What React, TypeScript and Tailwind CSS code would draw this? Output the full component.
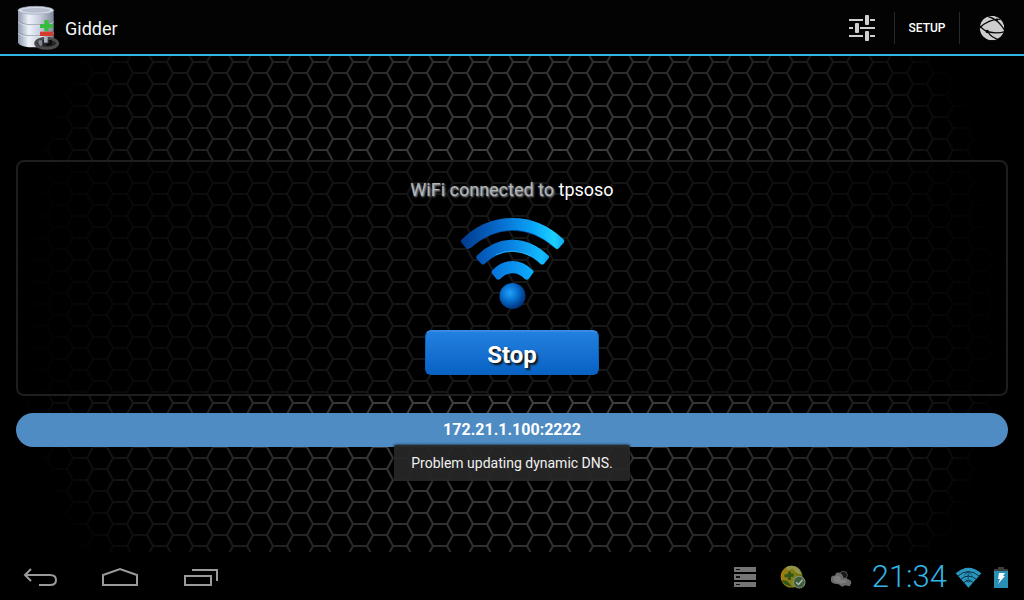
import React from 'react';

function HoneycombBackdrop() {
  return (
    <svg aria-hidden="true" className="absolute inset-0 h-full w-full">
      <defs>
        <pattern id="comb" x="0" y="6" width="40" height="22" patternUnits="userSpaceOnUse">
          <path
            d="M-7 0H7L13 11L7 22H-7M13 11H27L33 22H47M27 11L33 0H47"
            fill="none"
            stroke="#484848"
            strokeWidth="2"
          />
        </pattern>
        <radialGradient id="glow" cx="50%" cy="50%" r="50%">
          <stop offset="0" stopColor="#fff" />
          <stop offset="0.3" stopColor="#ddd" />
          <stop offset="0.6" stopColor="#8c8c8c" />
          <stop offset="0.85" stopColor="#404040" />
          <stop offset="0.98" stopColor="#000" />
        </radialGradient>
        <mask id="fade" maskUnits="userSpaceOnUse" x="0" y="-50%" width="100%" height="200%">
          <rect x="0" y="-50%" width="100%" height="200%" fill="url(#glow)" />
        </mask>
      </defs>
      <rect width="100%" height="100%" fill="url(#comb)" mask="url(#fade)" />
    </svg>
  );
}

function DatabaseIcon() {
  return (
    <svg aria-hidden="true" viewBox="48 15 135 138" className="h-[46px] w-[45px]">
      <defs>
        <linearGradient id="drum">
          <stop offset="0" stopColor="#8d98ad" />
          <stop offset="0.3" stopColor="#eef2fa" />
          <stop offset="0.6" stopColor="#c9d0de" />
          <stop offset="1" stopColor="#7e879b" />
        </linearGradient>
      </defs>
      <path d="M54 31V128Q60 142 107 142Q155 142 161 128V31Z" fill="url(#drum)" />
      <ellipse cx="107.500" cy="31" rx="53.500" ry="12" fill="#d5dae6" stroke="#98a1b4" strokeWidth="2" />
      <ellipse cx="107.500" cy="31" rx="43" ry="7" fill="#b6becd" />
      <path d="M54 63Q62 75 107 75Q153 75 161 63M54 97Q62 108 107 108Q153 108 161 97" fill="none" stroke="#616b80" strokeWidth="2" />
      <path d="M54 65Q62 77 107 77Q153 77 161 65M54 99Q62 110 107 110Q153 110 161 99" fill="none" stroke="#f5f7ff" strokeWidth="2" />
      <path d="M133 60H146V72H159V84H146V94H133V84H120V72H133Z" fill="#36bd3f" />
      <rect x="120" y="95" width="39" height="13" fill="#d83a30" />
      <ellipse cx="140" cy="130" rx="33" ry="15" fill="#242424" stroke="#4a4a4a" strokeWidth="9" />
      <path d="M116 121H127V137H120Q112 132 116 121Z" fill="#7d8493" />
      <path d="M132 109H143V128H132Z" fill="#aab1be" />
      <path d="M152 120V132L140 135" fill="none" stroke="#050505" strokeWidth="5" />
    </svg>
  );
}

function SlidersIcon() {
  return (
    <svg aria-hidden="true" viewBox="0 0 26 26" className="h-[26px] w-[26px]" fill="#cfcfcf">
      <path d="M0 4H14V6H0ZM21 4H26V6H21ZM0 12H4V14H0ZM11 12H26V14H11ZM0 20H14V22H0ZM21 20H26V22H21Z" />
      <rect x="16" y="0" width="4" height="10" rx="1" />
      <rect x="6" y="8" width="4" height="10" rx="1" />
      <rect x="16" y="16" width="4" height="10" rx="1" />
    </svg>
  );
}

function GlobeIcon() {
  return (
    <svg aria-hidden="true" viewBox="448 46 76 76" className="h-[26px] w-[26px]">
      <clipPath id="ball">
        <circle cx="486" cy="84" r="36" />
      </clipPath>
      <g clipPath="url(#ball)">
        <circle cx="486" cy="84" r="36" fill="#cdcdcd" />
        <g fill="none" stroke="#0a0a0a" strokeWidth="4">
          <path d="M448 74Q458 90 474 95Q500 102 526 94" />
          <path d="M450 84Q474 58 512 58" />
          <path d="M474 50Q504 58 524 92" />
          <path d="M474 95Q482 110 504 118" />
        </g>
        <circle cx="472" cy="94" r="5" fill="#0a0a0a" />
        <circle cx="500" cy="60" r="4" fill="#0a0a0a" />
      </g>
    </svg>
  );
}

function WifiLogo() {
  return (
    <svg aria-hidden="true" viewBox="182 171 314 279" className="mt-[15px] h-[93px] w-[105px]">
      <defs>
        <linearGradient id="waveA" gradientUnits="userSpaceOnUse" x1="184" y1="0" x2="495" y2="0">
          <stop offset="0" stopColor="#003a8c" />
          <stop offset="0.35" stopColor="#0868c8" />
          <stop offset="0.7" stopColor="#08a5f8" />
          <stop offset="0.9" stopColor="#1cd0ff" />
          <stop offset="1" stopColor="#10a9ef" />
        </linearGradient>
        <linearGradient id="waveB" gradientUnits="userSpaceOnUse" x1="230" y1="0" x2="450" y2="0">
          <stop offset="0" stopColor="#0350b0" />
          <stop offset="0.5" stopColor="#0a85e4" />
          <stop offset="0.9" stopColor="#14bcff" />
          <stop offset="1" stopColor="#0ba0ee" />
        </linearGradient>
        <linearGradient id="waveC" gradientUnits="userSpaceOnUse" x1="276" y1="0" x2="403" y2="0">
          <stop offset="0" stopColor="#0870d8" />
          <stop offset="1" stopColor="#0bb0ff" />
        </linearGradient>
        <radialGradient id="dot" cx="0.4" cy="0.38" r="0.62">
          <stop offset="0" stopColor="#22a2f8" />
          <stop offset="0.45" stopColor="#0874d4" />
          <stop offset="1" stopColor="#02337a" />
        </radialGradient>
      </defs>
      <path d="M187 238Q253 174 339 174T492 238Q497 243 492 249L478 265Q473 270 467 265Q407 211 339 211T211 265Q205 270 200 265L187 250Q182 244 187 238Z" fill="url(#waveA)" />
      <path d="M211 264Q271 211 339 211T467 264" fill="none" stroke="#0756b5" strokeWidth="2" />
      <path d="M233 286Q281 239 339 239T446 286Q452 291 446 296L434 311Q428 316 422 311Q383 275 339 275T256 311Q250 316 245 311L233 298Q227 292 233 286Z" fill="url(#waveB)" />
      <path d="M290 284Q338 262 395 288" fill="none" stroke="#34c5ff" strokeWidth="2" />
      <path d="M279 330Q306 303 339 303T399 330Q405 335 400 340L387 357Q382 362 376 357Q360 340 339 340T302 357Q297 362 291 357L278 341Q274 335 279 330Z" fill="url(#waveC)" />
      <circle cx="339" cy="408" r="39" fill="url(#dot)" />
    </svg>
  );
}

function NavButton({ label, children }: { label: string; children: React.ReactNode }) {
  return (
    <button type="button" aria-label={label} className="flex h-12 w-20 items-center justify-center">
      <svg aria-hidden="true" viewBox="0 0 36 20" className="h-5 w-9" fill="none" stroke="#9a9a9a" strokeWidth="2">
        {children}
      </svg>
    </button>
  );
}

function ServerIcon() {
  return (
    <svg aria-hidden="true" viewBox="0 0 22 20" className="h-5 w-[22px]">
      <path d="M0 0H22V5H0ZM0 7H22V13H0ZM0 15H22V20H0Z" fill="#757575" />
      <path d="M2 2H6V3H2ZM2 9H6V11H2ZM2 17H6V18H2Z" fill="#111" />
    </svg>
  );
}

function SyncedIcon() {
  return (
    <svg aria-hidden="true" viewBox="182 48 76 70" className="h-6 w-[26px]">
      <defs>
        <linearGradient id="earth" x2="1">
          <stop offset="0" stopColor="#a67c10" />
          <stop offset="0.6" stopColor="#857d10" />
          <stop offset="1" stopColor="#546812" />
        </linearGradient>
      </defs>
      <circle cx="216" cy="82" r="32" fill="url(#earth)" />
      <path d="M202 53Q222 44 239 61L246 77L232 72L218 58L201 64Z" fill="#8f9450" />
      <path d="M205 67H214V73H222V82H214V92H205V84H195V75H205ZM186 92L202 94L217 110Q197 111 186 92Z" fill="#2c5819" />
      <circle cx="238" cy="98" r="17" fill="#3c5e39" stroke="#87917f" strokeWidth="3" />
      <path d="M229 98L236 105L248 91" fill="none" stroke="#b4bab1" strokeWidth="4" />
    </svg>
  );
}

function CloudIcon() {
  return (
    <svg aria-hidden="true" viewBox="330 60 66 54" className="h-[18px] w-[22px]">
      <circle cx="370" cy="76" r="12" fill="#191919" stroke="#505050" strokeWidth="3" />
      <path d="M333 85Q334 75 345 77Q347 65 359 68Q367 71 371 84Q377 82 383 87Q394 90 394 99L389 109L377 106L366 110L356 103Q337 103 333 94Z" fill="#6a6a6a" />
      <path d="M340 82Q350 73 360 80L364 91Q377 85 382 97L362 101L342 94Z" fill="#7e7e7e" />
    </svg>
  );
}

function SignalIcon() {
  return (
    <svg aria-hidden="true" viewBox="704 46 80 64" className="h-[21px] w-[27px]">
      <path d="M705 65Q744 31 783 65L744 109Z" fill="#2a97c0" />
      <g fill="none" stroke="#092b38" strokeWidth="3">
        <path d="M711 74Q744 46 777 74M720 84Q744 63 768 84M729 94Q744 81 759 94" />
        <path d="M731 72L743 59L755 72M743 60V87M735 83L744 93L753 83" strokeWidth="2" />
      </g>
    </svg>
  );
}

function BatteryIcon() {
  return (
    <svg aria-hidden="true" viewBox="0 0 14 21" className="h-[21px] w-3.5">
      <path d="M4 0H10V2H14V5H0V2H4Z" fill="#3c3c3c" />
      <path d="M0 4H14V21H0Z" fill="#298fb5" />
      <path d="M5 6H11L9 9H11L4 17L6 12H4Z" fill="#f4fbff" />
    </svg>
  );
}

export default function App() {
  return (
    <div className="relative flex min-h-screen flex-col bg-black font-['Roboto',sans-serif] text-white">
      <header className="flex h-14 items-center border-b-2 border-[#33b5e5] bg-[#030303] pt-0.5 pl-4">
        <DatabaseIcon />
        <h1 className="ml-1 flex-1 pt-0.5 text-lg text-[#f3f3f3]">Gidder</h1>
        <button type="button" aria-label="Preferences" className="flex h-8 w-16 items-center justify-center">
          <SlidersIcon />
        </button>
        <button type="button" className="h-8 w-[66px] border-x border-[#292929] text-xs font-medium">
          SETUP
        </button>
        <button type="button" aria-label="Dynamic DNS" className="flex h-8 w-16 items-center justify-center">
          <GlobeIcon />
        </button>
      </header>

      <main className="relative flex flex-1 flex-col justify-center gap-[17px] px-4 pb-px">
        <HoneycombBackdrop />
        <section className="relative flex flex-col items-center rounded-lg border-2 border-[#1e1e1e] bg-black/65 pt-4 pb-[19px]">
          <p className="text-lg leading-6">
            <span className="text-[#b4b4b4] [text-shadow:1px_1px_2px_#aaa]">WiFi connected to</span>{' '}
            <span>tpsoso</span>
          </p>
          <WifiLogo />
          <button
            type="button"
            className="mt-5 h-[45px] w-[174px] rounded-md border border-t-2 border-[#0c61bc] border-t-[#398be0] bg-linear-to-b from-[#2380df] to-[#0762c4] pt-1 text-2xl leading-6 font-bold [text-shadow:2px_2px_2px_#111]"
          >
            Stop
          </button>
        </section>
        <p className="relative rounded-full bg-[#508cc4] py-[5px] text-center text-base leading-6 font-bold">
          172.21.1.100:2222
        </p>
      </main>

      <footer className="flex h-12 items-center justify-between bg-black">
        <nav aria-label="System" className="flex pt-0.5">
          <NavButton label="Back">
            <path d="M9 2L3 8L9 14M3 8H28Q34 8 34 13T28 18H17" />
          </NavButton>
          <NavButton label="Home">
            <path d="M1 18V8L18 2L35 8V18Z" />
          </NavButton>
          <NavButton label="Recent apps">
            <path d="M3 9H29V18H3ZM10 3H35V14" />
          </NavButton>
        </nav>
        <div className="flex items-center pt-0.5 pr-4">
          <ServerIcon />
          <span className="ml-6 flex">
            <SyncedIcon />
          </span>
          <span className="ml-6 flex pt-1">
            <CloudIcon />
          </span>
          <time className="ml-5 text-[31px] leading-8 font-light text-[#33b5e5]">21:34</time>
          <span className="ml-2 flex">
            <SignalIcon />
          </span>
          <span className="ml-3 flex">
            <BatteryIcon />
          </span>
        </div>
      </footer>

      <div className="pointer-events-none absolute inset-x-0 bottom-[119px] flex justify-center">
        <p role="status" className="rounded-xs bg-[#262626]/95 px-[17px] py-2 text-sm leading-5 text-[#f0f0f0] shadow-[0_0_3px_#000]">
          Problem updating dynamic DNS.
        </p>
      </div>
    </div>
  );
}
